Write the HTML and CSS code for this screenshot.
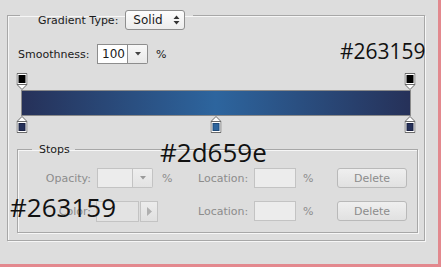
FILE: index.html
```html
<!DOCTYPE html>
<html>
<head>
<meta charset="utf-8">
<link rel="stylesheet" href="styles.css">
</head>
<body>
<div class="frame">
  <fieldset class="group">
    <legend class="group-legend">
      <span class="lbl">Gradient Type:</span>
      <span class="select"><span class="select-text">Solid</span><svg class="updown" width="7" height="10" viewBox="0 0 7 10"><path d="M3.5 0.5 L6.5 4 H0.5 Z M3.5 9.5 L6.5 6 H0.5 Z" fill="#333"/></svg></span>
    </legend>

    <div class="smooth-row">
      <span class="smooth-label">Smoothness:</span>
      <span class="combo">
        <span class="combo-field">100</span>
        <span class="combo-drop"><svg width="6" height="4" viewBox="0 0 6 4"><path d="M0 0 H6 L3 3.5 Z" fill="#444"/></svg></span>
      </span>
      <span class="unit">%</span>
    </div>

    <div class="gradient">
      <div class="marker-row">
        <svg class="marker" style="left:0%" width="11" height="17" viewBox="0 0 11 17"><path d="M0.5 0.5 H10.5 V11.5 L5.5 16.5 L0.5 11.5 Z" fill="#fff" stroke="#6a6a6a"/><path d="M0.5 11.5 H10.5" stroke="#6a6a6a"/><rect x="2" y="2" width="7" height="8" fill="#000"/></svg>
        <svg class="marker" style="left:100%" width="11" height="17" viewBox="0 0 11 17"><path d="M0.5 0.5 H10.5 V11.5 L5.5 16.5 L0.5 11.5 Z" fill="#fff" stroke="#6a6a6a"/><path d="M0.5 11.5 H10.5" stroke="#6a6a6a"/><rect x="2" y="2" width="7" height="8" fill="#000"/></svg>
      </div>
      <div class="bar"></div>
      <div class="marker-row">
        <svg class="marker" style="left:0%" width="11" height="17" viewBox="0 0 11 17"><path d="M5.5 0.5 L10.5 5.5 V16.5 H0.5 V5.5 Z" fill="#fff" stroke="#6a6a6a"/><path d="M0.5 5.5 H10.5" stroke="#6a6a6a"/><rect x="2.5" y="7.5" width="6" height="7" fill="#263159" stroke="#1b2242"/></svg>
        <svg class="marker" style="left:50%" width="11" height="17" viewBox="0 0 11 17"><path d="M5.5 0.5 L10.5 5.5 V16.5 H0.5 V5.5 Z" fill="#fff" stroke="#6a6a6a"/><path d="M0.5 5.5 H10.5" stroke="#6a6a6a"/><rect x="2.5" y="7.5" width="6" height="7" fill="#2d659e" stroke="#1f4a78"/></svg>
        <svg class="marker" style="left:100%" width="11" height="17" viewBox="0 0 11 17"><path d="M5.5 0.5 L10.5 5.5 V16.5 H0.5 V5.5 Z" fill="#fff" stroke="#6a6a6a"/><path d="M0.5 5.5 H10.5" stroke="#6a6a6a"/><rect x="2.5" y="7.5" width="6" height="7" fill="#263159" stroke="#1b2242"/></svg>
      </div>
    </div>

    <fieldset class="stops">
      <legend class="stops-legend">Stops</legend>
      <div class="stops-grid">
        <span class="dim-label">Opacity:</span>
        <span class="combo dis combo-op">
          <span class="combo-field dis-field"></span>
          <span class="combo-drop dis-drop"><svg width="6" height="4" viewBox="0 0 6 4"><path d="M0 0 H6 L3 3.5 Z" fill="#9a9a9a"/></svg></span>
        </span>
        <span class="dim-unit">%</span>
        <span class="dim-text">Location:</span>
        <span class="dis-input"></span>
        <span class="dim-text">%</span>
        <span class="btn">Delete</span>

        <span class="dim-label">Color:</span>
        <span class="swatch-combo">
          <span class="swatch"></span>
          <span class="swatch-btn"><svg width="5" height="9" viewBox="0 0 5 9"><path d="M0 0 L5 4.5 L0 9 Z" fill="#b0b0b0"/></svg></span>
        </span>
        <span class="dim-unit"></span>
        <span class="dim-text">Location:</span>
        <span class="dis-input"></span>
        <span class="dim-text">%</span>
        <span class="btn">Delete</span>
      </div>
    </fieldset>
  </fieldset>

  <span class="tag tag-a">#263159</span>
  <span class="tag tag-b">#2d659e</span>
  <span class="tag tag-c">#263159</span>
</div>
</body>
</html>
```

FILE: styles.css
```css
html, body {
  margin: 0;
  padding: 0;
  background: #dddddd;
}

.frame {
  position: relative;
  width: 431px;
  height: 263px;
  padding: 1px 0 0 7px;
  border-right: 3px solid #e3888e;
  border-bottom: 3px solid #e3888e;
  font-family: "DejaVu Sans", Verdana, sans-serif;
  font-size: 11px;
  color: #1a1a1a;
  overflow: hidden;
}

.group {
  margin: 0;
  padding: 0;
  box-sizing: border-box;
  width: 418px;
  height: 240px;
  border: 1px solid #a7a7a7;
  box-shadow: inset 1px 1px 0 #f6f6f6, 1px 1px 0 #f6f6f6;
  min-width: 0;
}

.group-legend {
  display: flex;
  align-items: center;
  margin-left: 12px;
  padding: 9px 8px 0 18px;
  height: 20px;
  box-sizing: content-box;
}

.lbl {
  margin-right: 7px;
}

.select {
  display: flex;
  align-items: center;
  justify-content: space-between;
  box-sizing: border-box;
  width: 60px;
  height: 20px;
  padding: 0 4px 0 7px;
  border: 1px solid #8e8e8e;
  border-radius: 3px;
  background: linear-gradient(#fdfdfd, #ececec);
  font-size: 12px;
}

.smooth-row {
  display: flex;
  align-items: center;
  height: 20px;
  margin: 14px 0 0 10px;
}

.smooth-label {
  width: 79px;
}

.combo {
  display: flex;
  height: 20px;
  box-sizing: border-box;
}

.combo-field {
  box-sizing: border-box;
  width: 31px;
  height: 20px;
  border: 1px solid #8d8d8d;
  background: #fff;
  padding: 2px 0 0 4px;
  font-size: 12px;
}

.combo-drop {
  box-sizing: border-box;
  width: 20px;
  height: 20px;
  border: 1px solid #8d8d8d;
  border-left: none;
  border-radius: 0 2px 2px 0;
  background: linear-gradient(#f8f8f8, #e9e9e9);
  display: flex;
  align-items: center;
  justify-content: center;
}

.unit {
  margin-left: 8px;
}

.gradient {
  margin: 9px 0 0 13px;
  width: 390px;
  display: flex;
  flex-direction: column;
}

.marker-row {
  position: relative;
  height: 17px;
  margin: 0 1px;
}

.marker {
  position: absolute;
  top: 0;
  transform: translateX(-50%);
  display: block;
}

.bar {
  box-sizing: border-box;
  height: 26px;
  border: 1px solid #8a8a8a;
  background: linear-gradient(to right, #263159 0%, #2d659e 50%, #263159 100%);
}

.stops {
  margin: 10px 0 0 9px;
  padding: 0 0 11px 0;
  width: 399px;
  border: 1px solid #a7a7a7;
  box-shadow: inset 1px 1px 0 #f6f6f6, 1px 1px 0 #f6f6f6;
  min-width: 0;
}

.stops-legend {
  margin-left: 14px;
  padding: 0 5px 0 7px;
  line-height: 13px;
  color: #1a1a1a;
}

.stops-grid {
  display: grid;
  grid-template-columns: 78px 66px 36px 56px 49px 34px 70px;
  grid-auto-rows: 20px;
  row-gap: 13px;
  margin-top: 12px;
  align-items: center;
}

.dim-label {
  color: #8c8c8c;
  text-align: right;
  padding-right: 5px;
}

.dim-text,
.dim-unit {
  color: #8c8c8c;
}

.combo-op {
  margin-left: 1px;
}

.dis-field {
  width: 36px;
  border-color: #c3c3c3;
  background: #ececec;
}

.dis-drop {
  border-color: #c3c3c3;
  background: linear-gradient(#eeeeee, #e3e3e3);
}

.swatch-combo {
  display: flex;
  height: 21px;
}

.swatch {
  box-sizing: border-box;
  width: 43px;
  height: 21px;
  border: 1px solid #c3c3c3;
  background: #e3e3e3;
}

.swatch-btn {
  box-sizing: border-box;
  width: 18px;
  height: 21px;
  margin-left: 1px;
  border: 1px solid #c3c3c3;
  background: linear-gradient(#ececec, #e0e0e0);
  display: flex;
  align-items: center;
  justify-content: center;
}

.dis-input {
  box-sizing: border-box;
  width: 42px;
  height: 20px;
  border: 1px solid #c3c3c3;
  background: #ececec;
}

.btn {
  box-sizing: border-box;
  width: 70px;
  height: 20px;
  border: 1px solid #b9b9b9;
  border-radius: 3px;
  background: linear-gradient(#efefef, #e1e1e1);
  color: #8c8c8c;
  display: flex;
  align-items: center;
  justify-content: center;
}

.tag {
  position: absolute;
  font-family: "Open Sans", "Noto Sans", sans-serif;
  line-height: 1;
  color: #111;
  white-space: nowrap;
}

.tag-a {
  left: 340px;
  top: 41px;
  font-size: 21px;
}

.tag-b {
  left: 160px;
  top: 139px;
  font-size: 26px;
}

.tag-c {
  left: 10px;
  top: 194px;
  font-size: 26px;
}
```
